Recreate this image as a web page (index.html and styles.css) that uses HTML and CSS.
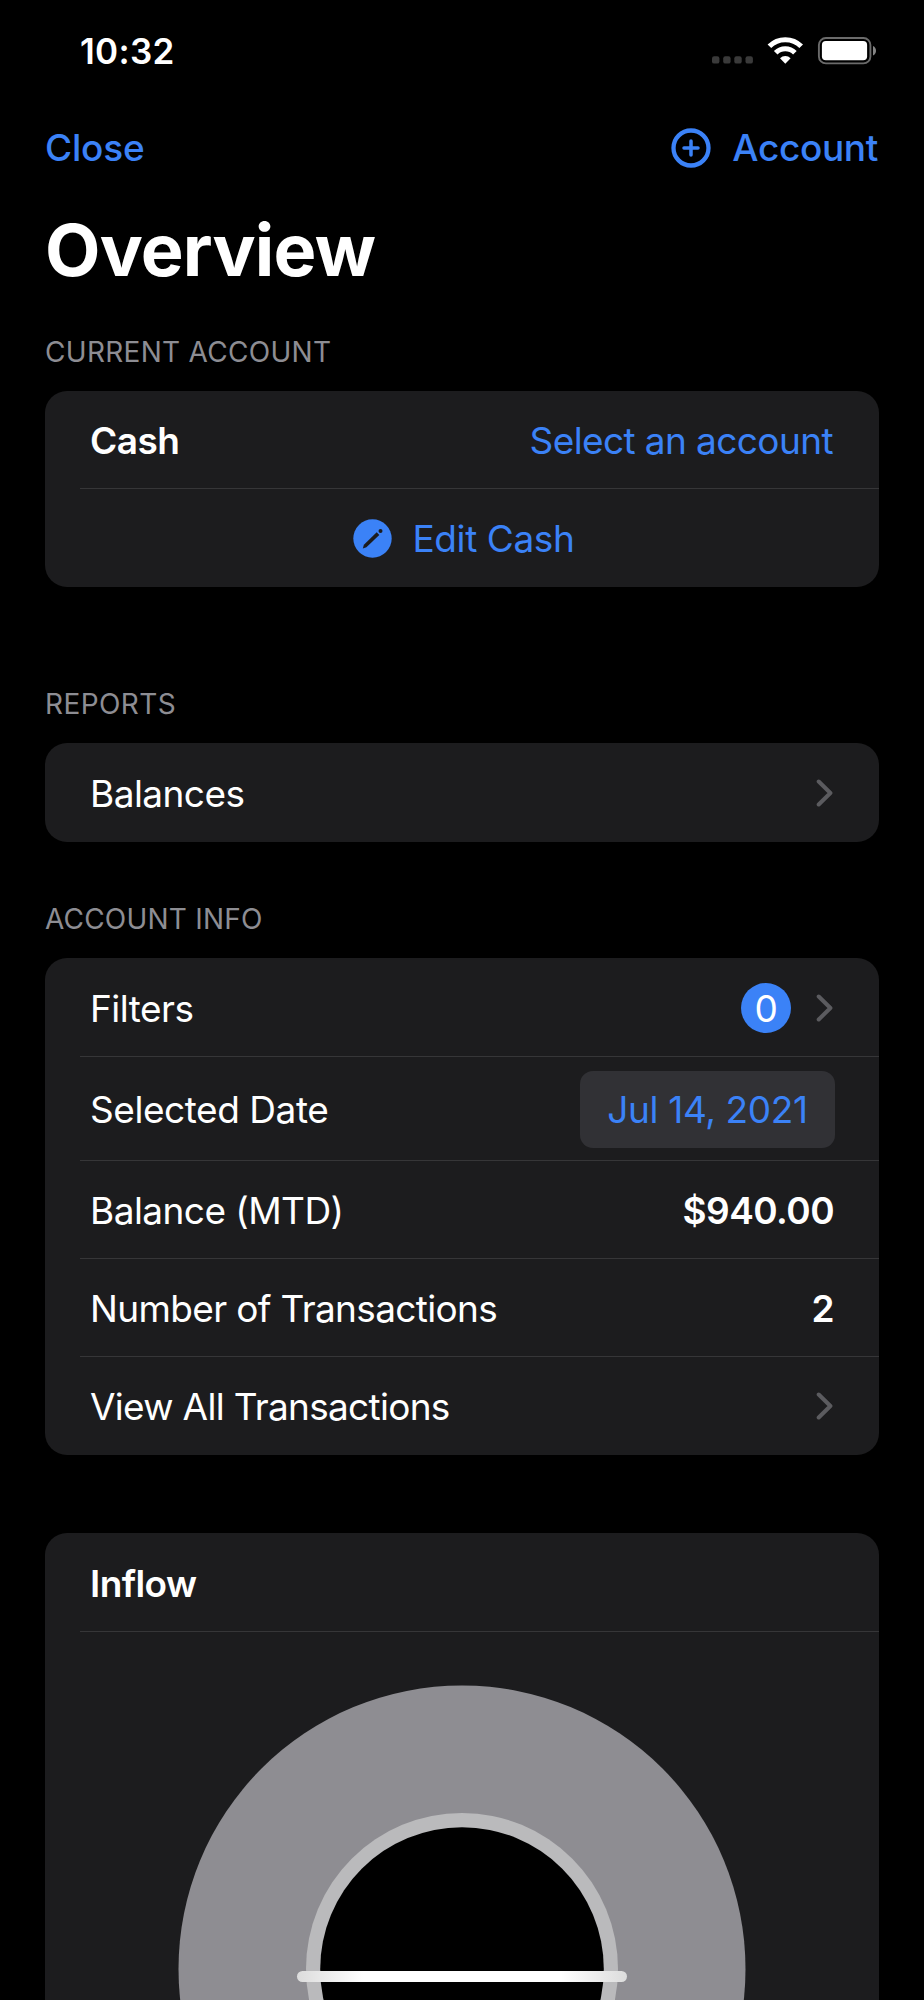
FILE: index.html
```html
<!DOCTYPE html>
<html lang="en">
<head>
<meta charset="utf-8">
<title>Overview</title>
<link rel="stylesheet" href="styles.css">
</head>
<body>
<div class="screen">
  <header class="status-bar">
    <span class="time">10:32</span>
    <svg class="status-icons" width="166" height="28" viewBox="0 0 166 28">
      <g fill="#3a3a3a">
        <rect x="0" y="19.2" width="7.4" height="7.4" rx="2.2"/>
        <rect x="11.2" y="19.2" width="7.4" height="7.4" rx="2.2"/>
        <rect x="22.3" y="19.2" width="7.4" height="7.4" rx="2.2"/>
        <rect x="33.5" y="19.2" width="7.4" height="7.4" rx="2.2"/>
      </g>
      <g fill="none" stroke="#fff" stroke-width="5.1">
        <path d="M57.4 9.3a22.4 22.4 0 0 1 31.8 0"/>
        <path d="M63.7 15.7a13.6 13.6 0 0 1 19.2 0"/>
      </g>
      <path d="M73.3 26.8l-5.3-5.5a7.5 7.5 0 0 1 10.6 0z" fill="#fff"/>
      <rect x="106.9" y="1" width="51.5" height="25.4" rx="7" fill="none" stroke="#6b6b6b" stroke-width="1.9"/>
      <rect x="109.9" y="4" width="45.2" height="19.2" rx="4" fill="#fff"/>
      <path d="M161 9c4 1.5 4 8 0 9.5z" fill="#858585"/>
    </svg>
  </header>

  <nav class="nav">
    <a class="nav-link close">Close</a>
    <a class="nav-link add">
      <svg width="40" height="40" viewBox="0 0 40 40" fill="none" stroke="currentColor">
        <circle cx="20" cy="20" r="17.5" stroke-width="4.3"/>
        <path d="M20 13v14M13 20h14" stroke-width="3.5" stroke-linecap="round"/>
      </svg>
      <span>Account</span>
    </a>
  </nav>

  <h1 class="title">Overview</h1>

  <h2 class="label">CURRENT ACCOUNT</h2>
  <section class="card">
    <div class="row"><b>Cash</b><a class="link select">Select an account</a></div>
    <div class="row center">
      <svg width="39" height="39" viewBox="0 0 39 39">
        <circle cx="19.5" cy="19.5" r="19.2" fill="#3b82f7"/>
        <path d="M23.7 13.3l2.6 2.6L13.400 28.300l-3.600 1.200 1.100-3.700z" fill="#1c1c1e"/>
        <circle cx="27.5" cy="12" r="2" fill="#1c1c1e"/>
      </svg>
      <a class="link edit">Edit Cash</a>
    </div>
  </section>

  <h2 class="label reports">REPORTS</h2>
  <section class="card">
    <div class="row single">
      <span class="name">Balances</span>
      <svg class="chevron" width="18" height="28" viewBox="0 0 18 28"><path d="M2.7 2.5L14.4 14 2.7 25.5"/></svg>
    </div>
  </section>

  <h2 class="label info">ACCOUNT INFO</h2>
  <section class="card">
    <div class="row single">
      <span class="name filters">Filters</span>
      <span class="trail">
        <span class="badge">0</span>
        <svg class="chevron" width="18" height="28" viewBox="0 0 18 28"><path d="M2.7 2.5L14.4 14 2.7 25.5"/></svg>
      </span>
    </div>
    <div class="row date-row"><span class="name spaced">Selected Date</span><span class="date">Jul 14, 2021</span></div>
    <div class="row"><span class="name">Balance (MTD)</span><b>$940.00</b></div>
    <div class="row"><span class="name number">Number of Transactions</span><b>2</b></div>
    <div class="row">
      <span class="name view">View All Transactions</span>
      <svg class="chevron" width="18" height="28" viewBox="0 0 18 28"><path d="M2.7 2.5L14.4 14 2.7 25.5"/></svg>
    </div>
  </section>

  <section class="card inflow">
    <div class="row single"><b class="inflow-name">Inflow</b></div>
    <div class="chart">
      <svg width="568" height="568" viewBox="0 0 568 568">
        <circle cx="284" cy="284" r="283.5" fill="#8e8d92"/>
        <circle cx="284" cy="284" r="156" fill="#bababc"/>
        <circle cx="284" cy="284" r="141.8" fill="#000"/>
      </svg>
    </div>
  </section>
  <div class="home-bar"></div>
</div>
</body>
</html>
```

FILE: styles.css
```css
* { box-sizing: border-box; }
body { margin: 0; background: #000; }
.screen {
  position: relative;
  width: 924px;
  height: 2000px;
  overflow: hidden;
  background: #000;
  color: #fff;
  font-family: Inter, "Liberation Sans", sans-serif;
  font-size: 37px;
  line-height: 44px;
  letter-spacing: -0.55px;
}
b { font-weight: 600; }
.status-bar {
  display: flex;
  justify-content: space-between;
  align-items: center;
  height: 102px;
  padding: 0 46px 0 80px;
}
.time { font-size: 35px; font-weight: 600; letter-spacing: 0.3px; }
.nav {
  display: flex;
  justify-content: space-between;
  align-items: center;
  height: 92px;
  padding: 0 46px 0 45px;
}
.nav-link {
  display: flex;
  align-items: center;
  color: #3b82f7;
  font-weight: 500;
}
.close { letter-spacing: -0.2px; }
.add { gap: 21px; letter-spacing: -0.35px; }
.title {
  height: 118px;
  margin: 0;
  padding-left: 45px;
  font-size: 72px;
  font-weight: 700;
  line-height: 111px;
  letter-spacing: -0.8px;
}
.label {
  height: 79px;
  margin: 0;
  padding: 22px 0 0 45px;
  color: #8d8d93;
  font-size: 28px;
  font-weight: 400;
  line-height: 36px;
  letter-spacing: 0.3px;
}
.reports { margin-top: 77px; letter-spacing: 0.4px; }
.info { margin-top: 37px; letter-spacing: 0.2px; }
.card {
  margin: 0 45px;
  border-radius: 22px;
  background: #1c1c1e;
  overflow: hidden;
}
.row {
  display: flex;
  justify-content: space-between;
  align-items: center;
  height: 98px;
  padding: 0 45px;
  background: linear-gradient(#363638, #363638) 35px 100% / 100% 1px no-repeat;
}
.row:last-child { background: none; }
.single { height: 99px; }
.name, .row b, .link { padding-top: 2px; }
.link { color: #3b82f7; }
.select { margin-right: 1px; letter-spacing: -0.6px; }
.center { justify-content: center; gap: 21px; padding-left: 47px; padding-right: 44px; }
.edit { letter-spacing: -0.4px; }
.chevron {
  fill: none;
  stroke: #5b5b5f;
  stroke-width: 4;
  stroke-linecap: round;
  stroke-linejoin: round;
}
.trail { display: flex; align-items: center; gap: 25px; }
.badge {
  width: 50px;
  height: 50px;
  border-radius: 50%;
  background: #3b82f7;
  line-height: 51px;
  text-align: center;
}
.filters { letter-spacing: -0.5px; }
.date-row { height: 104px; padding-right: 44px; }
.spaced { letter-spacing: -0.45px; }
.date {
  width: 255px;
  height: 77px;
  border-radius: 13px;
  background: #313135;
  color: #3b82f7;
  line-height: 77px;
  text-align: center;
  letter-spacing: -0.35px;
}
.number { letter-spacing: -0.65px; }
.view { letter-spacing: -0.7px; }
.inflow { margin-top: 78px; height: 700px; }
.inflow-name { letter-spacing: -0.6px; }
.chart { display: flex; justify-content: center; padding-top: 53px; }
.home-bar {
  position: absolute;
  left: 297px;
  top: 1971px;
  width: 330px;
  height: 11px;
  border-radius: 5.5px;
  background: linear-gradient(90deg, #dcdcdc, #fff 20%, #fff 80%, #dcdcdc);
}
```
